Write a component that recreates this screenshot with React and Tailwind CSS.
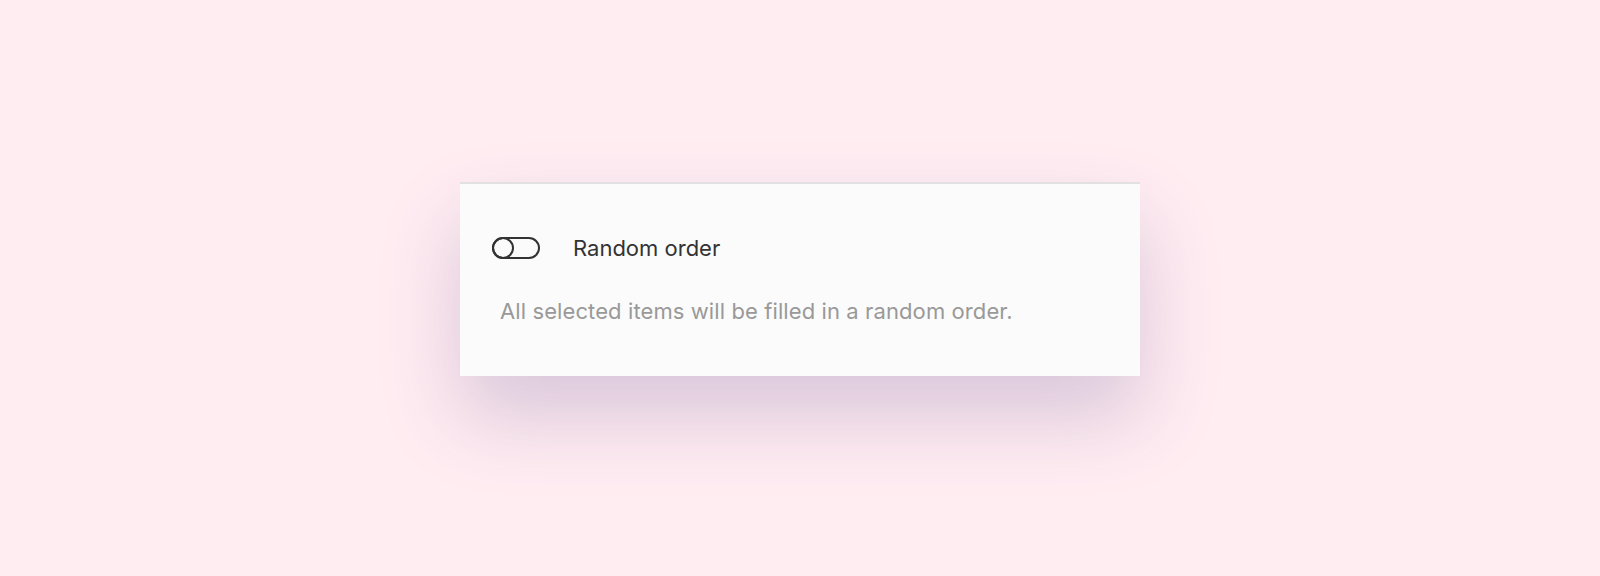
export default function App() {
  return (
    <div className="w-[1600px] h-[576px] bg-[#ffedf2] flex justify-center pt-[182px]" style={{ fontFamily: 'Inter, "Noto Sans", sans-serif' }}>
      <div className="w-[680px] h-[194px] bg-[#fbfbfb] border-t-2 border-[#e3e0e2] shadow-[0_40px_80px_rgba(80,60,130,0.22)] flex flex-col">
        <div className="flex items-center pl-[32px] pt-[52px]">
          <div className="w-[48px] h-[22px] rounded-full border-2 border-[#333333] relative">
            <div className="absolute left-[-2px] top-[-2px] w-[22px] h-[22px] rounded-full border-2 border-[#333333]" />
          </div>
          <span className="ml-[33px] text-[22px] leading-[24px] text-[#333333]">Random order</span>
        </div>
        <div className="pl-[40px] mt-[38px] text-[22px] leading-[26px] tracking-[0.1px] text-[#999999]">
          All selected items will be filled in a random order.
        </div>
      </div>
    </div>
  );
}
